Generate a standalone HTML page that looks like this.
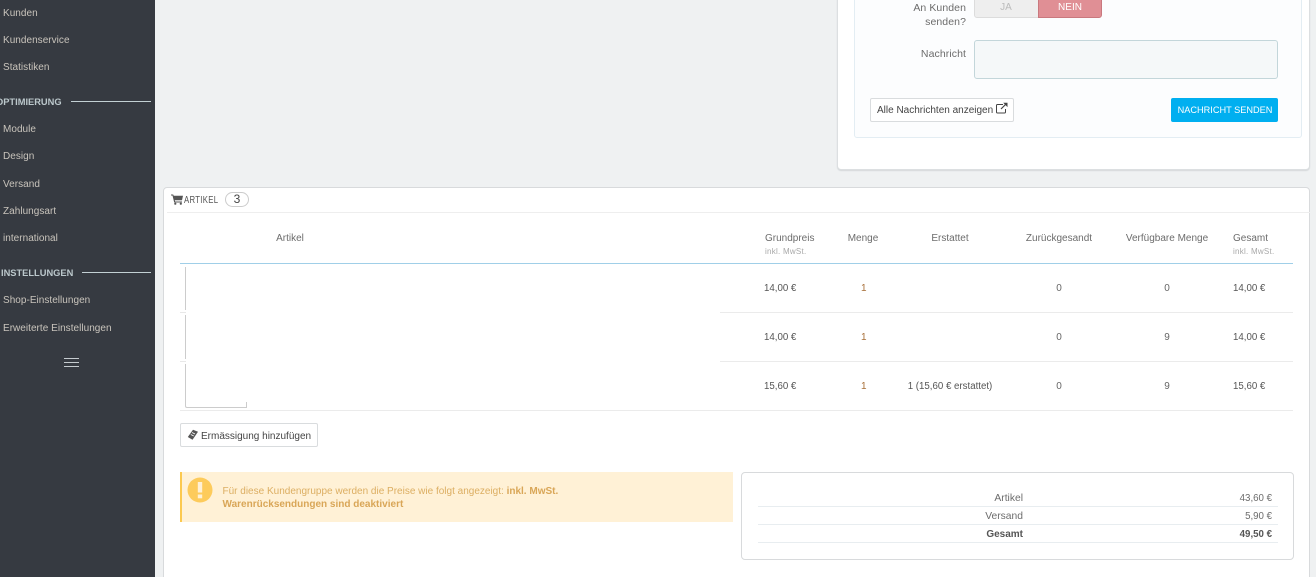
<!DOCTYPE html>
<html lang="de"><head><meta charset="utf-8"><title>Bestellung</title>
<style>
html,body{margin:0;padding:0;width:1316px;height:577px;overflow:hidden;background:#eff1f2}
body{font-family:"Liberation Sans",sans-serif;font-size:10px;color:#666;position:relative}
.a{position:absolute;white-space:nowrap;line-height:14px}
.box{position:absolute;box-sizing:border-box}
.side{left:0;top:0;width:155px;height:577px;background:#363a41}
.m{left:3px;color:#c9c4bc;font-size:10px;letter-spacing:.03px}
.h{color:#bcc8cc;font-weight:bold;font-size:9.3px}
.l{height:1px;background:#c3d0d4}
.c{transform:translateX(-50%)}
.r{transform:translateX(-100%)}
.t{color:#6c6c6c}
.o{color:#a8703a}
.lb{font-size:10.5px;letter-spacing:.08px}
.n{color:#555;font-size:9.7px}
</style></head><body>
<div class="box side"></div>
<div class="a m" style="top:7px">Kunden</div>
<div class="a m" style="top:34px">Kundenservice</div>
<div class="a m" style="top:61px">Statistiken</div>
<div class="a h" style="left:-4px;top:95px">OPTIMIERUNG</div>
<div class="box l" style="left:71px;top:101px;width:80px"></div>
<div class="a m" style="top:123px">Module</div>
<div class="a m" style="top:150px">Design</div>
<div class="a m" style="top:178px">Versand</div>
<div class="a m" style="top:205px">Zahlungsart</div>
<div class="a m" style="top:232px">international</div>
<div class="a h" style="left:1px;top:266px">INSTELLUNGEN</div>
<div class="box l" style="left:82px;top:272px;width:69px"></div>
<div class="a m" style="top:294px">Shop-Einstellungen</div>
<div class="a m" style="top:322px">Erweiterte Einstellungen</div>
<div class="box" style="left:64px;top:358px;width:15px;height:9px;border-top:1px solid #c5cbcf;border-bottom:1px solid #c5cbcf"></div>
<div class="box" style="left:64px;top:362px;width:15px;height:1px;background:#c5cbcf"></div>

<!-- top right card -->
<div class="box" style="left:837px;top:-10px;width:473px;height:180px;background:#fff;border:1px solid #dcdfe1;border-radius:4px;box-shadow:0 1px 1px #d5d8da"></div>
<div class="box" style="left:854px;top:-10px;width:448px;height:148px;background:#fcfdfe;border:1px solid #e3edf3;border-radius:3px"></div>
<div class="a r t lb" style="left:966px;top:1px">An Kunden</div>
<div class="a r t lb" style="left:966px;top:15px">senden?</div>
<div class="box" style="left:974px;top:-6px;width:65px;height:24px;background:#eee;border:1px solid #dcdcdc;border-radius:3px 0 0 3px"></div>
<div class="box" style="left:1038px;top:-6px;width:64px;height:24px;background:#e08f95;border:1px solid #c9787e;border-radius:0 3px 3px 0"></div>
<div class="a c" style="left:1006px;top:1px;color:#bbb">JA</div>
<div class="a c" style="left:1070px;top:1px;color:#fff">NEIN</div>
<div class="a r t lb" style="left:966px;top:47px">Nachricht</div>
<div class="box" style="left:974px;top:40px;width:304px;height:39px;background:#f5f8f9;border:1px solid #c3d6da;border-radius:3px"></div>
<div class="box" style="left:870px;top:98px;width:144px;height:24px;background:#fff;border:1px solid #d9dcde;border-radius:2px"></div>
<div class="a" style="left:877px;top:104px;color:#444">Alle Nachrichten anzeigen</div>
<svg class="box" style="left:995px;top:102px" width="14" height="12" viewBox="0 0 14 12" fill="none" stroke="#444" stroke-width="1"><path d="M8 2.500H2.500a1 1 0 0 0-1 1v6.500a1 1 0 0 0 1 1h7a1 1 0 0 0 1-1V7"/><path d="M6 7l5-5" stroke-width="1.200"/><path d="M8.200 .8h4.300v4.300z" fill="#444" stroke="none"/></svg>
<div class="box" style="left:1171px;top:98px;width:107px;height:24px;background:#00aff0;border-radius:2px"></div>
<div class="a c" style="left:1225px;top:103px;color:#fff;font-size:9.2px">NACHRICHT SENDEN</div>

<!-- main panel -->
<div class="box" style="left:163px;top:187px;width:1147px;height:400px;background:#fff;border:1px solid #d8dadc;border-radius:4px"></div>
<div class="box" style="left:167px;top:212px;width:1143px;height:1px;background:#eee"></div>
<svg class="box" style="left:171px;top:194px" width="12" height="11" viewBox="0 0 12 11"><path d="M0 .5h2.200l.5 1.300H12l-1 4.500H3.800l.3 1.200H11v1H3.200L1.500 1.500H0z" fill="#555"/><circle cx="4.300" cy="9.700" r="1.100" fill="#555"/><circle cx="9.800" cy="9.700" r="1.100" fill="#555"/></svg>
<div class="a" style="left:184px;top:193px;font-size:10.5px;color:#555;transform:scaleX(.74);transform-origin:left;letter-spacing:.4px">ARTIKEL</div>
<div class="box" style="left:225px;top:192px;width:24px;height:15px;border:1px solid #ccc;border-radius:8px;background:#fff"></div>
<div class="a c" style="left:237px;top:192px;font-size:12px;color:#444">3</div>

<div class="a c t" style="left:290px;top:232px">Artikel</div>
<div class="a t" style="left:765px;top:232px">Grundpreis</div>
<div class="a" style="left:765px;top:245px;font-size:8px;color:#a8a8a8;letter-spacing:.25px">inkl. MwSt.</div>
<div class="a c t" style="left:863px;top:232px">Menge</div>
<div class="a c t" style="left:950px;top:232px">Erstattet</div>
<div class="a c t" style="left:1059px;top:232px">Zurückgesandt</div>
<div class="a c t" style="left:1167px;top:232px">Verfügbare Menge</div>
<div class="a t" style="left:1233px;top:232px">Gesamt</div>
<div class="a" style="left:1233px;top:245px;font-size:8px;color:#a8a8a8;letter-spacing:.25px">inkl. MwSt.</div>

<div class="box" style="left:180px;top:263px;width:1113px;height:1px;background:#a0cfe8"></div>
<div class="box" style="left:720px;top:312px;width:573px;height:1px;background:#ebebeb"></div>
<div class="box" style="left:720px;top:361px;width:573px;height:1px;background:#ebebeb"></div>
<div class="box" style="left:180px;top:312px;width:6px;height:1px;background:#e8e8e8"></div>
<div class="box" style="left:180px;top:361px;width:6px;height:1px;background:#e8e8e8"></div>
<div class="box" style="left:180px;top:410px;width:1113px;height:1px;background:#ebebeb"></div>
<div class="box" style="left:185px;top:267px;width:1px;height:43px;background:#ccc"></div>
<div class="box" style="left:185px;top:315px;width:1px;height:44px;background:#ccc"></div>
<div class="box" style="left:185px;top:364px;width:62px;height:44px;border-left:1px solid #ccc;border-bottom:1px solid #ccc;border-bottom-left-radius:2px"></div>
<div class="box" style="left:246px;top:402px;width:1px;height:6px;background:#ccc"></div>

<div class="a n" style="left:764px;top:282px">14,00 €</div>
<div class="a o" style="left:861px;top:282px">1</div>
<div class="a c" style="left:1059px;top:282px">0</div>
<div class="a c" style="left:1167px;top:282px">0</div>
<div class="a n" style="left:1233px;top:282px">14,00 €</div>
<div class="a n" style="left:764px;top:331px">14,00 €</div>
<div class="a o" style="left:861px;top:331px">1</div>
<div class="a c" style="left:1059px;top:331px">0</div>
<div class="a c" style="left:1167px;top:331px">9</div>
<div class="a n" style="left:1233px;top:331px">14,00 €</div>
<div class="a n" style="left:764px;top:380px">15,60 €</div>
<div class="a o" style="left:861px;top:380px">1</div>
<div class="a c n" style="left:950px;top:380px">1 (15,60 € erstattet)</div>
<div class="a c" style="left:1059px;top:380px">0</div>
<div class="a c" style="left:1167px;top:380px">9</div>
<div class="a n" style="left:1233px;top:380px">15,60 €</div>

<div class="box" style="left:180px;top:423px;width:138px;height:24px;background:#fff;border:1px solid #d9dcde;border-radius:2px"></div>
<svg class="box" style="left:187px;top:429px" width="12" height="12" viewBox="0 0 12 12"><path d="M6 .8l5 2-5.500 8L.8 8z" fill="#555"/><path d="M5 3.500l3 1.500M3.800 5.500l3 1.500" stroke="#fff" stroke-width=".8"/></svg>
<div class="a" style="left:201px;top:430px;color:#444">Ermässigung hinzufügen</div>

<div class="box" style="left:180px;top:472px;width:553px;height:50px;background:#fff1d6;border-left:2px solid #fcc94f"></div>
<svg class="box" style="left:187px;top:477px" width="26" height="26" viewBox="0 0 26 26"><circle cx="13" cy="13" r="12.500" fill="#fdcb5b"/><rect x="10.800" y="5" width="4.400" height="10.500" fill="#fff1d6"/><rect x="10.800" y="17.500" width="4.400" height="3.800" fill="#fff1d6"/></svg>
<div class="a" style="left:222.500px;top:485px;color:#dcae62">Für diese Kundengruppe werden die Preise wie folgt angezeigt: <b style="color:#d9a657">inkl. MwSt.</b></div>
<div class="a" style="left:222.500px;top:498px;color:#d9a657;font-weight:bold">Warenrücksendungen sind deaktiviert</div>

<div class="box" style="left:741px;top:472px;width:553px;height:88px;background:#fff;border:1px solid #d8dadc;border-radius:4px"></div>
<div class="box" style="left:758px;top:506px;width:520px;height:1px;background:#e8edf0"></div>
<div class="box" style="left:758px;top:524px;width:520px;height:1px;background:#e8edf0"></div>
<div class="box" style="left:758px;top:542px;width:520px;height:1px;background:#e8edf0"></div>
<div class="a r t" style="left:1023px;top:492px;font-size:10.3px">Artikel</div>
<div class="a r t" style="left:1272px;top:492px;font-size:9.7px">43,60 €</div>
<div class="a r t" style="left:1023px;top:510px;font-size:10.3px">Versand</div>
<div class="a r t" style="left:1272px;top:510px;font-size:9.7px">5,90 €</div>
<div class="a r" style="left:1023px;top:528px;font-weight:bold;color:#555">Gesamt</div>
<div class="a r" style="left:1272px;top:528px;font-weight:bold;color:#555;font-size:9.7px">49,50 €</div>
</body></html>
